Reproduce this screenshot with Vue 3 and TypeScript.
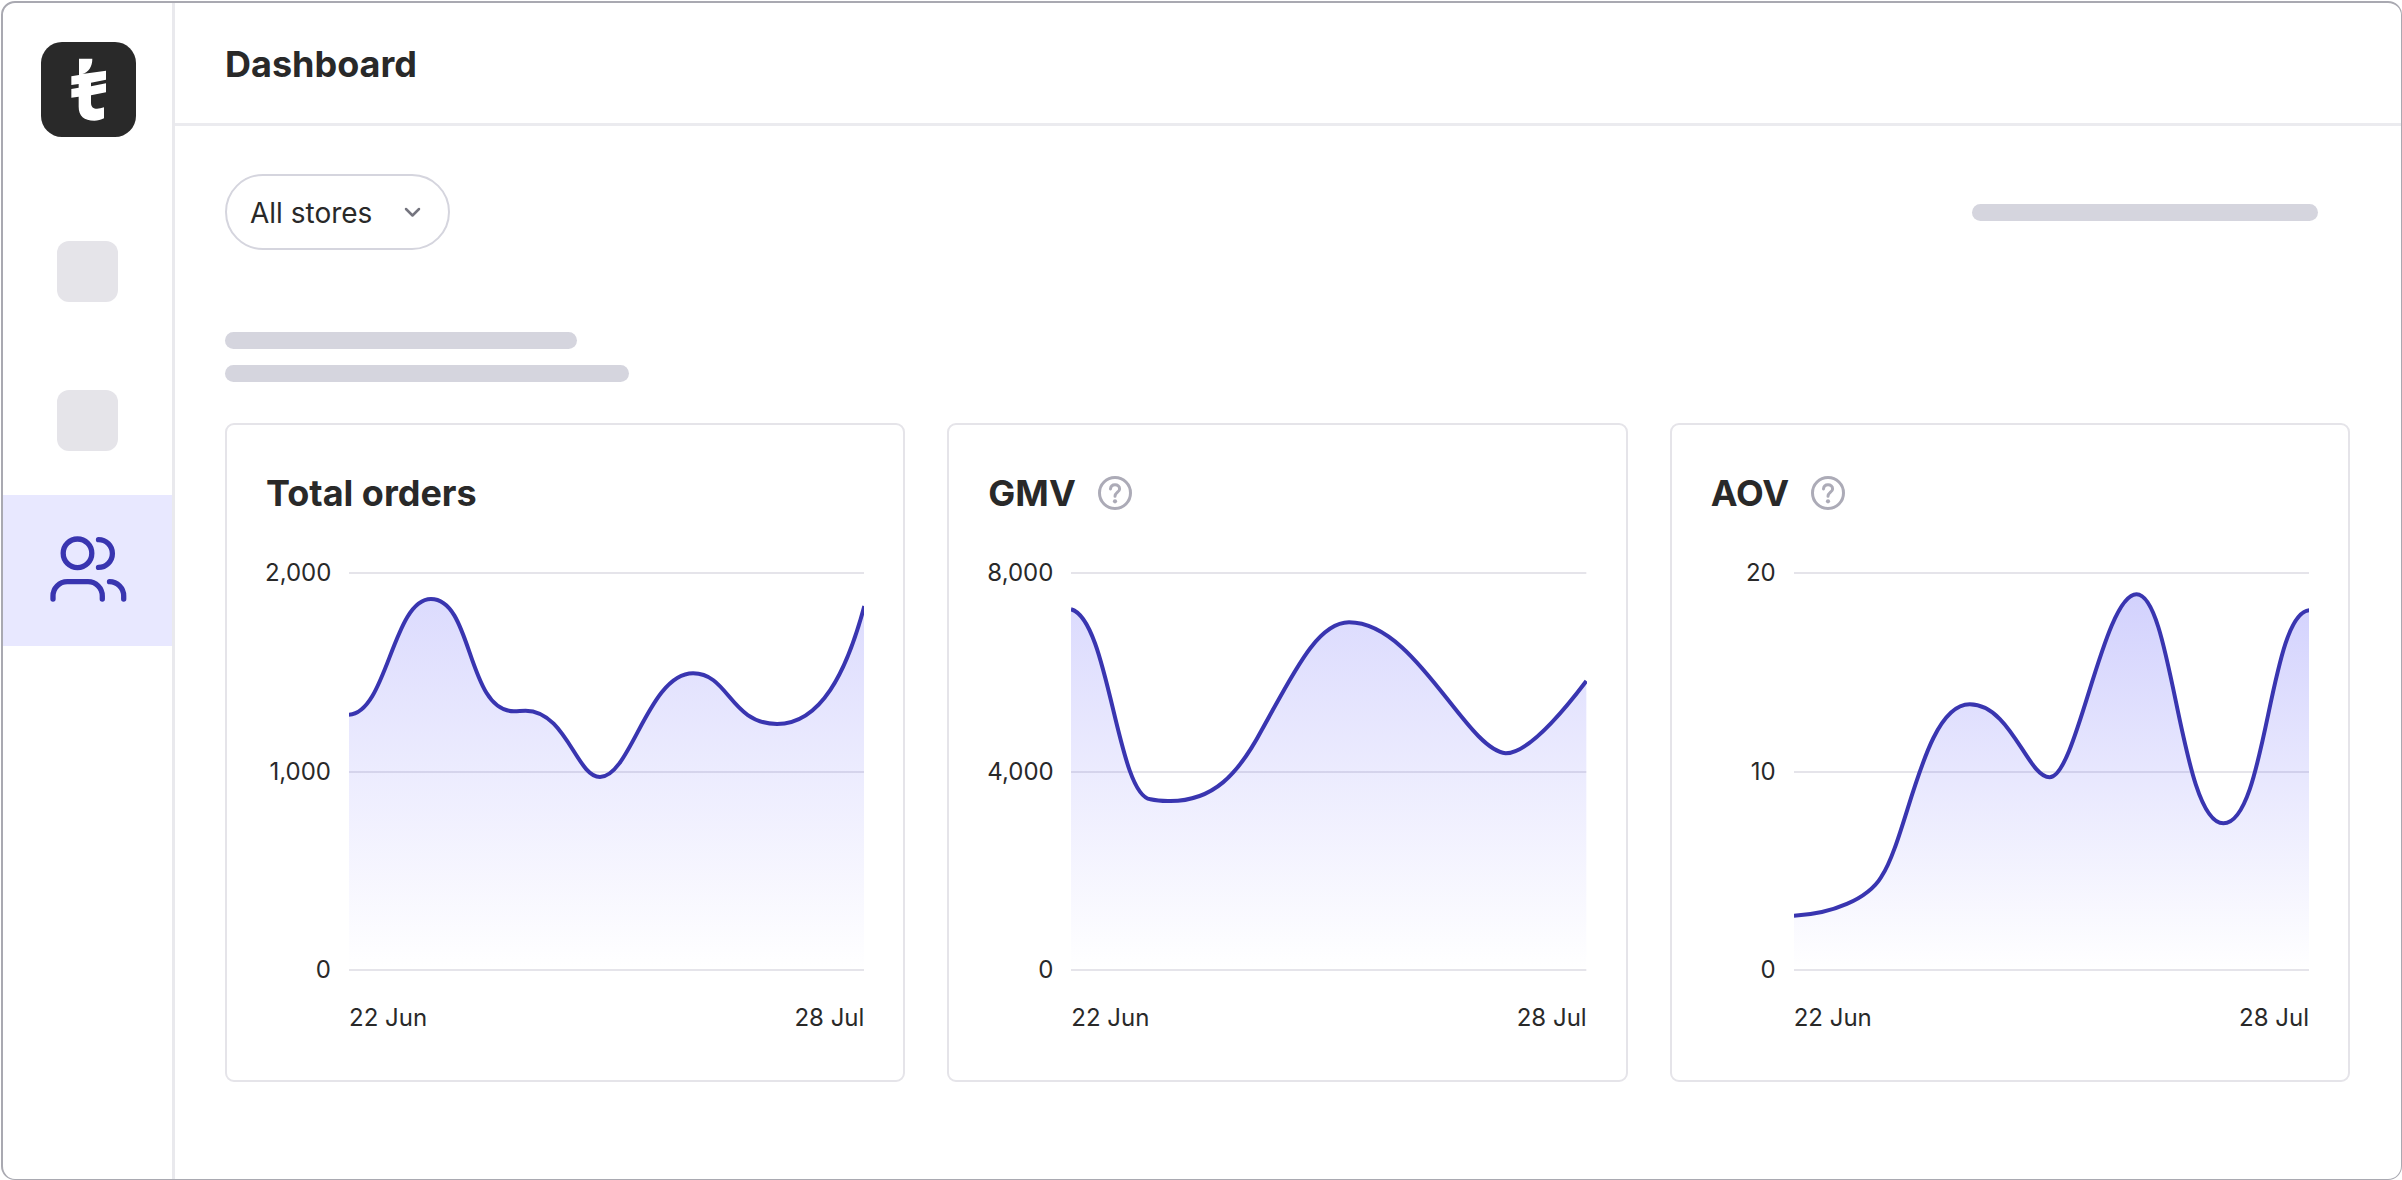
<script setup lang="ts">
import { ref } from 'vue'

interface Metric {
  id: string
  title: string
  help: boolean
  ticks: string[]
  opacity: number
  line: string
}

const store = ref('all')

const metrics: Metric[] = [
  {
    id: 'orders',
    title: 'Total orders',
    help: false,
    ticks: ['2,000', '1,000', '0'],
    opacity: 0.22,
    line: 'M0 141.7C38 140 44 26 82.1 26C124 26 118 138.3 165.2 138.3C170 138.3 172 137.7 176.8 137.7C217 137.7 228 204 251.3 204C282 204 300 100.3 344.6 100.3C380 100.3 382 151 428.6 151C472 151 498 100 516 33',
  },
  {
    id: 'gmv',
    title: 'GMV',
    help: true,
    ticks: ['8,000', '4,000', '0'],
    opacity: 0.22,
    line: 'M0 36.3C38 46 46 222 79.5 226.3C88 228.3 94 228 99.6 228C142 228 167 202 191 157C222 102 246 49.3 278.4 49.3C345 49.3 395 176 435.3 180.3C452 180.3 478 158 516 108',
  },
  {
    id: 'aov',
    title: 'AOV',
    help: true,
    ticks: ['20', '10', '0'],
    opacity: 0.28,
    line: 'M0 342.7C38 341 74 326 87.5 303.7C114 264 130 131.3 176 131.3C217 131.3 234 204.3 256 204.3C283 204.3 310 21.3 343 21.3C379 21.3 387 250.3 430 250.3C473 250.3 476 40 516 37.3',
  },
]
</script>

<template>
  <div class="frame">
    <aside class="sidebar">
      <a class="logo" href="#" aria-label="Home">
        <svg viewBox="123 126 285 285" aria-hidden="true">
          <path
            fill="#fff"
            d="M237 176H277C277 200 266 216 247 222L318 212V239L273 248V259L318 250V277L273 286V308C273 328 290 330 312 322V355C303 360 293 362 283 362C252 362 236 347 236 320V290L214 293V267L236 263V252L214 255V229L237 225Z"
          />
        </svg>
      </a>
      <nav class="nav" aria-label="Main">
        <span class="nav-item"><span class="block"></span></span>
        <span class="nav-item"><span class="block"></span></span>
        <a class="nav-item active" href="#" aria-label="Customers" aria-current="page">
          <svg class="users" viewBox="0 0 78 68" aria-hidden="true">
            <circle cx="28.500" cy="16.300" r="14.300" />
            <path d="M49.500 2.650a13.900 13.900 0 0 1 0 27.800" />
            <path d="M4 62V59a14.300 14.300 0 0 1 14.300-14.300H39A14.300 14.300 0 0 1 53.300 59V62" />
            <path d="M60.500 44.700A14.300 14.300 0 0 1 74.700 59V62" />
          </svg>
        </a>
      </nav>
    </aside>

    <div class="page">
      <header class="header">
        <h1>Dashboard</h1>
      </header>

      <main class="content">
        <div class="filters">
          <div class="picker">
            <select v-model="store" aria-label="Store">
              <option value="all">All stores</option>
            </select>
            <svg class="chevron" viewBox="0 0 17 11" aria-hidden="true">
              <path d="M2 2l6.500 6.500L15 2" />
            </svg>
          </div>
          <span class="bar bar-filter"></span>
        </div>

        <div class="intro">
          <span class="bar bar-short"></span>
          <span class="bar bar-long"></span>
        </div>

        <div class="cards">
          <section v-for="m in metrics" :key="m.id" class="card">
            <div class="card-head">
              <h2>{{ m.title }}</h2>
              <button v-if="m.help" class="help" type="button" :aria-label="`About ${m.title}`">
                <svg viewBox="0 0 34 34" aria-hidden="true">
                  <circle cx="17" cy="17" r="15.500" stroke-width="3" />
                  <path d="M12.500 12.900C12.800 10 14.500 8.700 17 8.700C19.600 8.700 21.600 10.300 21.600 12.900C21.600 16 17 16.500 17 20.300" stroke-width="3" />
                  <circle class="dot" cx="17" cy="25.300" r="2.100" />
                </svg>
              </button>
            </div>
            <div class="chart">
              <div class="y-axis">
                <span v-for="t in m.ticks" :key="t">{{ t }}</span>
              </div>
              <svg class="plot" viewBox="0 -1 516 399" preserveAspectRatio="none" role="img" :aria-label="m.title">
                <defs>
                  <linearGradient :id="`fill-${m.id}`" x1="0" y1="0" x2="0" y2="1">
                    <stop offset="0" stop-color="#5f5cf8" :stop-opacity="m.opacity" />
                    <stop offset="1" stop-color="#5f5cf8" stop-opacity="0" />
                  </linearGradient>
                </defs>
                <path class="grid" d="M0 0H516M0 199H516M0 397H516" />
                <path :d="`${m.line}V397H0Z`" :fill="`url(#fill-${m.id})`" />
                <path class="line" :d="m.line" />
              </svg>
              <div class="x-axis">
                <span>22 Jun</span>
                <span>28 Jul</span>
              </div>
            </div>
          </section>
        </div>
      </main>
    </div>
  </div>
</template>

<style>
body {
  background: #fff;
}
</style>

<style scoped>
* {
  box-sizing: border-box;
}

.frame {
  display: flex;
  min-height: calc(100vh - 1px);
  margin: 1px 0 0 1px;
  border: 2px solid #a9a9b1;
  border-right-width: 1px;
  border-bottom-width: 1px;
  border-radius: 14px;
  overflow: hidden;
  background: #fff;
  color: #292929;
  font-family: Inter, "Liberation Sans", sans-serif;
}

.sidebar {
  flex: none;
  width: 172px;
  border-right: 3px solid #e9e9ed;
}

.logo {
  display: block;
  width: 95px;
  height: 95px;
  margin: 39px auto 60px 38px;
  border-radius: 21px;
  background: #292929;
}

.logo svg {
  display: block;
  width: 100%;
}

.nav-item {
  display: flex;
  align-items: center;
  justify-content: center;
  height: 149px;
}

.nav-item.active {
  height: 151px;
  background: #e8e8ff;
}

.block {
  width: 61px;
  height: 61px;
  border-radius: 12px;
  background: #e5e4e9;
}

.users {
  width: 78px;
  height: 68px;
  fill: none;
  stroke: #3935b0;
  stroke-width: 5.3;
  stroke-linecap: round;
  overflow: visible;
}

.page {
  flex: 1;
  min-width: 0;
}

.header {
  padding: 39px 50px 37px;
  border-bottom: 3px solid #ebebef;
}

h1,
h2 {
  margin: 0;
  font-size: 36px;
  line-height: 44px;
  font-weight: 700;
}

.content {
  padding: 48px 51px 48px 50px;
}

.filters {
  display: flex;
  align-items: center;
  justify-content: space-between;
}

.picker {
  position: relative;
}

.picker select {
  display: block;
  appearance: none;
  width: 225px;
  height: 76px;
  padding: 1px 60px 0 23px;
  border: 2px solid #d5d5de;
  border-radius: 38px;
  background: #fff;
  color: inherit;
  font-family: inherit;
  font-size: 28px;
}

.chevron {
  position: absolute;
  top: 33px;
  right: 29px;
  width: 17px;
  height: 11px;
  fill: none;
  stroke: #75757f;
  stroke-width: 2.5;
  stroke-linecap: round;
  stroke-linejoin: round;
  pointer-events: none;
}

.bar {
  display: block;
  height: 17px;
  border-radius: 9px;
  background: #d5d5de;
}

.bar-filter {
  width: 346px;
  margin-right: 32px;
}

.intro {
  display: flex;
  flex-direction: column;
  gap: 16px;
  margin: 82px 0 41px;
}

.bar-short {
  width: 352px;
}

.bar-long {
  width: 404px;
}

.cards {
  display: grid;
  grid-template-columns: repeat(3, 1fr);
  gap: 42px;
}

.card {
  padding: 46px 39px 47px 38px;
  border: 2px solid #e5e4e9;
  border-radius: 9px;
}

.card-head {
  display: flex;
  align-items: center;
  gap: 22px;
  margin-bottom: 43px;
  padding-left: 1px;
}

.help {
  width: 34px;
  height: 34px;
  padding: 0;
  border: 0;
  background: none;
}

.help svg {
  display: block;
  fill: none;
  stroke: #acabb7;
  stroke-linecap: round;
}

.help .dot {
  fill: #acabb7;
  stroke: none;
}

.chart {
  display: grid;
  grid-template-columns: 66px 1fr;
  column-gap: 18px;
  font-size: 24px;
  line-height: 30px;
}

.y-axis {
  display: flex;
  flex-direction: column;
  justify-content: space-between;
  text-align: right;
}

.plot {
  display: block;
  width: 100%;
  height: 399px;
  margin: 14px 0;
  overflow: hidden;
}

.grid {
  fill: none;
  stroke: #e5e4ea;
  stroke-width: 2;
}

.line {
  fill: none;
  stroke: #3935b0;
  stroke-width: 4;
}

.x-axis {
  grid-column: 2;
  display: flex;
  justify-content: space-between;
  margin-top: 18px;
}
</style>
